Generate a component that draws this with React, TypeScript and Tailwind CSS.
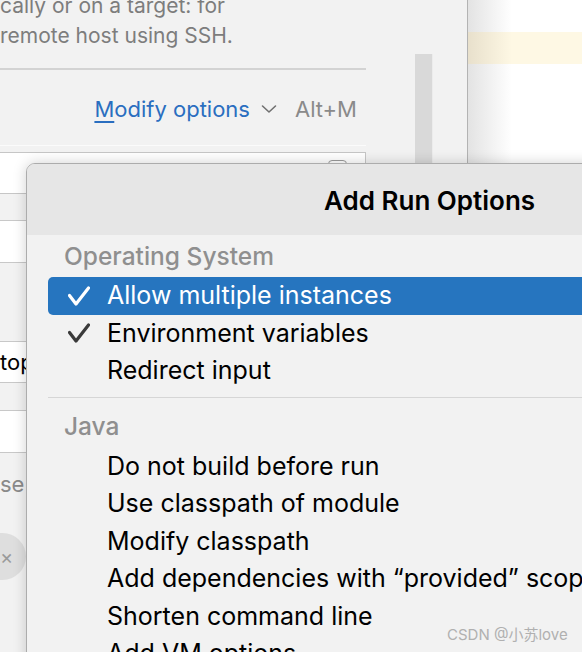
import React from "react";

function Check({ color }: { color: string }) {
  return (
    <svg width="22" height="20" viewBox="0 0 22 20" fill="none">
      <path d="M1.5 9.5 L8 18 L20.5 2" stroke={color} strokeWidth="3.2" strokeLinecap="round" strokeLinejoin="round" />
    </svg>
  );
}

function Item({ label, checked, selected }: { label: string; checked?: boolean; selected?: boolean }) {
  return (
    <div
      className={
        "ml-[21px] flex h-[37.5px] items-center " +
        (selected ? "rounded-l-[5px] bg-[#2675bf] text-white" : "text-black")
      }
    >
      <div className="flex w-[59px] justify-start pl-[20px]">
        {checked && <Check color={selected ? "#ffffff" : "#3a3a3a"} />}
      </div>
      <span className="whitespace-nowrap">{label}</span>
    </div>
  );
}

function GroupTitle({ label, h }: { label: string; h: string }) {
  return (
    <div className={"flex items-center pl-[37px] text-[24.5px] font-medium text-[#8f8f8f] " + h}>{label}</div>
  );
}

export default function App() {
  return (
    <div className="relative h-[652px] w-[582px] overflow-hidden bg-[#f2f2f2] text-[22px] [font-family:Inter,sans-serif]">
      <div className="flex h-full">
        {/* dialog behind */}
        <div className="flex w-[468px] shrink-0 border-r border-[#b3b3b3] bg-[#f2f2f2]">
          <div className="w-[366px] shrink-0">
            <div className="-mt-[9px] text-[21px] leading-[30px] whitespace-nowrap text-[#7d7d7d]">
              <div>cally or on a target: for</div>
              <div>remote host using SSH.</div>
            </div>
            <div className="mt-[17px] h-[2px] bg-[#d3d3d3]" />
            <div className="flex h-[75px] items-center justify-end gap-[18px] pr-[9px] pt-[3px]">
              <span className="flex items-center text-[#2a6ec0]">
                <span className="underline underline-offset-[4px]">M</span>odify options
                <svg className="ml-[11px]" width="16" height="10" viewBox="0 0 16 10" fill="none">
                  <path d="M1.5 2 L8 8 L14.5 2" stroke="#707070" strokeWidth="1.6" strokeLinecap="round" strokeLinejoin="round" />
                </svg>
              </span>
              <span className="text-[#8a8a8a]">Alt+M</span>
            </div>
            <div className="h-px bg-[#fbfbfb]" />
            <div className="mt-[6px] h-[42px] border border-l-0 border-[#c6c6c6] bg-white">
              <div className="ml-[328px] mt-[7px] h-[20px] w-[19px] rounded-[4px] border border-[#9a9a9a]" />
            </div>
            <div className="h-[26px]" />
            <div className="h-[43px] border-y border-[#c8c8c8] bg-white" />
            <div className="h-[78px]" />
            <div className="flex h-[42px] items-center border-y border-[#c8c8c8] bg-white text-black">top</div>
            <div className="h-[27px]" />
            <div className="h-[43px] border-y border-[#c8c8c8] bg-white" />
            <div className="flex h-[44px] items-end leading-[26px] text-[#8a8a8a]">se</div>
            <div className="h-[36px]" />
            <div className="-ml-[40px] flex h-[47px] w-[66px] items-center rounded-full bg-[#dedede] pl-[40px] text-[20px] text-[#9a9a9a]">
              ×
            </div>
          </div>
          <div className="ml-[49px] mt-[54px] h-[130px] w-[18px] border-r border-[#ececec] bg-[#d9d9d9]" />
        </div>
        {/* editor on the right */}
        <div className="flex-1 bg-[linear-gradient(to_right,#e3e3e3,#ffffff_44px)] pt-[32px]">
          <div className="h-[32px] bg-[linear-gradient(to_right,#e8e0cc,#fef8e4_44px)]" />
        </div>
      </div>

      {/* popup */}
      <div className="absolute left-[26px] top-[163px] -right-[30px] -bottom-[30px] overflow-hidden rounded-tl-[9px] border border-[#acacac] bg-[#f2f2f2] text-[25px] shadow-[0_0_14px_rgba(0,0,0,0.18)]">
        <div className="flex h-[71px] items-center bg-[#e6e6e6] pl-[297px] pt-[2px] text-[26px] font-semibold text-black">
          Add Run Options
        </div>
        <GroupTitle label="Operating System" h="h-[42px]" />
        <Item label="Allow multiple instances" checked selected />
        <Item label="Environment variables" checked />
        <Item label="Redirect input" />
        <div className="ml-[21px] my-[7px] h-px bg-[#d6d6d6]" />
        <GroupTitle label="Java" h="h-[43px]" />
        <Item label="Do not build before run" />
        <Item label="Use classpath of module" />
        <Item label="Modify classpath" />
        <Item label="Add dependencies with “provided” scope" />
        <Item label="Shorten command line" />
        <Item label="Add VM options" />
      </div>

      <div className="absolute left-[447px] top-[624px] whitespace-nowrap text-[15px] text-[#b0b0b0] [font-family:Inter,'Noto_Sans_CJK_SC',sans-serif]">
        CSDN @小苏love
      </div>
    </div>
  );
}
